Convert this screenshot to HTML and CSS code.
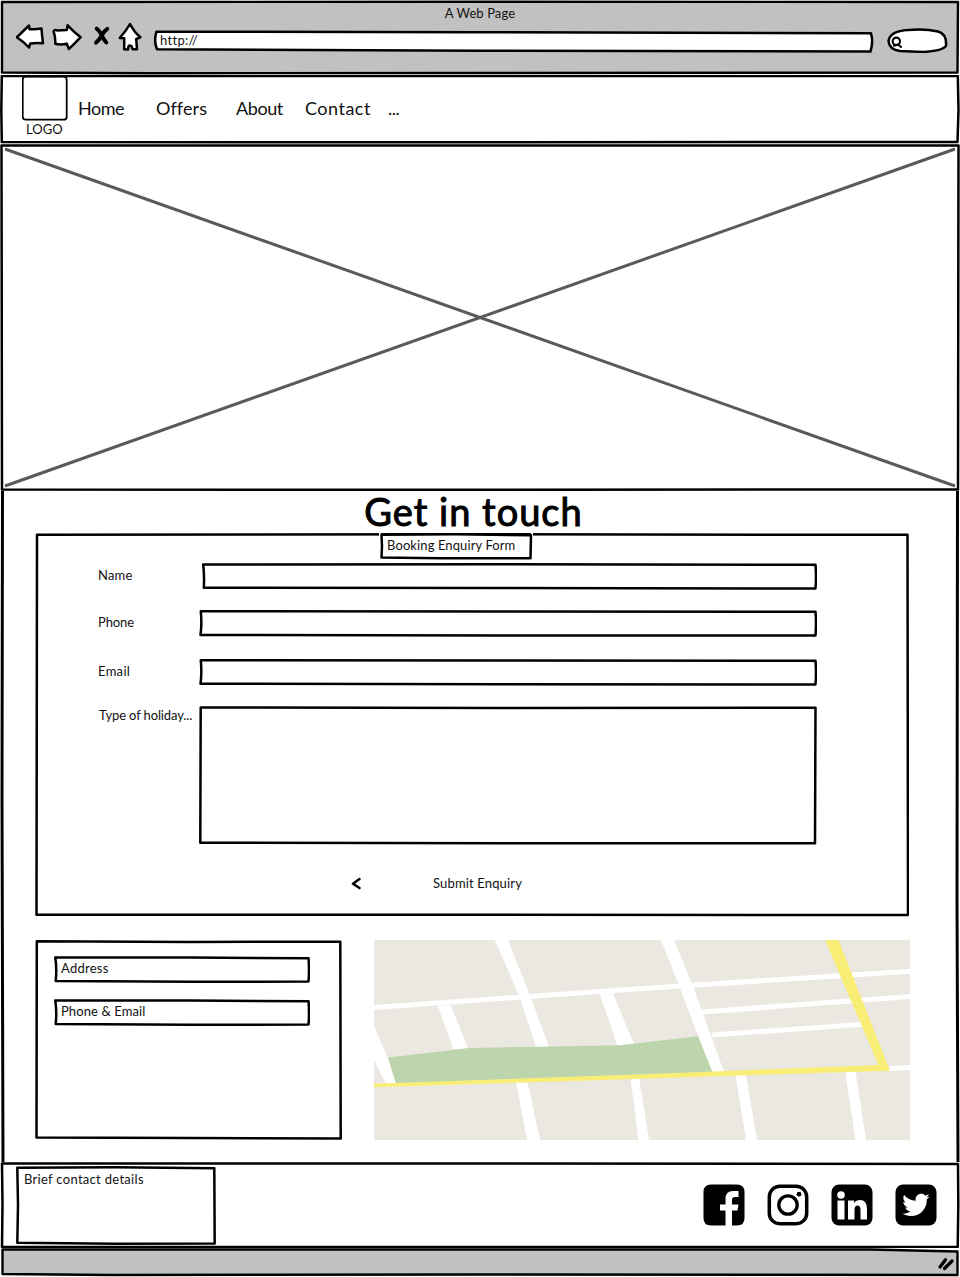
FILE: index.html
```html
<!DOCTYPE html>
<html lang="en">
<head>
<meta charset="utf-8">
<title>A Web Page</title>
<link rel="stylesheet" href="styles.css">
</head>
<body>
<div class="window">
  <header class="chrome stack">
    <svg class="ink" viewBox="0 0 960 75"><path class="grey" d="M2 2 480 1.8 958 2 957.5 72.5 480 73 150 73.2 2 72.5Z"/></svg>
    <div class="chrome-body">
      <div class="window-title"><span class="t-title">A Web Page</span></div>
      <div class="toolbar">
        <svg class="ink" width="29" height="30" viewBox="16 23 29 30"><path class="paper" d="M16.8 37.3 29 25.5 29.6 29.3Q36 29.6 41.5 28.6 42 36 43 43.2 36 42.5 30.3 43.5L29 47.5Q24 42 16.8 37.3Z"/></svg>
        <svg class="ink right" width="30" height="30" viewBox="52 23 30 30"><path class="paper" d="M53.6 31.5Q54.2 29.5 57 30.4L66.8 30 67.6 25.3Q74 32 80.6 37.2 74.5 44 68.8 49L66.8 43.6Q61 45.2 55.3 43.8 55.6 37 53.6 31.5Z"/></svg>
        <svg class="ink stop" width="18" height="30" viewBox="93 23 18 30"><path class="cancel" d="M96.700 28.600 Q100 31 101.700 35.500 104 40 106.300 42.500M107.300 28.800Q103.500 31.500 101.700 35.500 99 40.500 96 42.600"/></svg>
        <svg class="ink home" width="25" height="30" viewBox="118 23 25 30"><path class="paper" d="M130 24Q134 32 140.300 37.300L136.200 39 137 49.200 132.500 49.200 131.500 46Q129.500 45 128.600 46L128 49.500 124.200 49.200 124.200 38.200 119.700 38Q126 31 130 24Z"/></svg>
        <div class="url stack">
          <svg class="ink" viewBox="154 23 720 30"><path class="paper" d="M156.500 31.700 480 32.200 871 33.300Q873.500 42 870.500 51.500L480 50.700 157 49.300Q153.500 41 156.500 31.700Z"/></svg>
          <span class="t-url">http://</span>
        </div>
        <svg class="ink search" width="62" height="30" viewBox="886 23 62 30"><path class="paper" d="M900 51Q889 49.500 888.500 41 890 31 908 30 925 28.500 938 31.500 947 34 946 46 942 51 923 52 911 51.500 900 51Z"/><circle class="line lens" cx="896.300" cy="41.300" r="3.700"/><path class="line lens" d="M894 45.700 898 44.500 901 47"/></svg>
      </div>
    </div>
  </header>

  <nav class="nav stack">
    <svg class="ink" viewBox="0 75 960 69"><path class="line" d="M1.800 76 480 76 957.800 76 958.500 110 957.500 142 480 142.300 1.800 142 1.300 110Z"/></svg>
    <div class="nav-body">
      <div class="brand">
        <svg class="ink" width="46" height="46" viewBox="22 75 46 46"><rect class="line logo-box" x="22.700" y="76.700" width="44" height="43" rx="3"/></svg>
        <span class="t-logo">LOGO</span>
      </div>
      <div class="links">
        <a class="t-home">Home</a><a class="t-offers">Offers</a><a class="t-about">About</a><a class="t-contact">Contact</a><a class="t-more">...</a>
      </div>
    </div>
  </nav>

  <section class="hero">
    <svg class="ink" viewBox="0 144 960 347"><path class="cross" d="M5 149 955 486M5 486 955 149"/><path class="line" d="M1.500 145.500H958.500L958 489.500 480 489.800 2 489.500Z"/></svg>
  </section>

  <main class="main stack">
    <svg class="ink" viewBox="0 491 960 671"><path class="side" d="M2.500 491 2 800 3 1162M957.500 491 957 900 958 1162"/></svg>
    <div class="main-body">
      <h1 class="heading"><span class="t-heading">Get in touch</span></h1>

      <form class="enquiry stack">
        <svg class="ink" viewBox="35 533 874 384"><path class="line" d="M37 534.800 480 534.300 907.500 534.800 908 915 480 914.800 36.500 914.800Z"/></svg>
        <div class="enquiry-body">
          <div class="legend stack">
            <svg class="ink" viewBox="380 533 152 27"><path class="gap" d="M380 532V538M532 532V538"/><path class="paper" d="M381.500 534.800 455 534.300 531 535.200 530.500 558.300 440 558.300 381.500 557.500 382 546Z"/></svg>
            <span class="t-legend">Booking Enquiry Form</span>
          </div>
          <div class="row row-name"><label class="t-name">Name</label>
            <svg class="ink" width="616" height="28" viewBox="201 562 616 28"><path class="line" d="M203.200 564.500 500 564.200 815.500 564.800Q816.500 576 815.500 588.500L500 588 203.800 587.800Q204.500 576 203.200 564.500Z"/></svg></div>
          <div class="row row-phone"><label class="t-phone">Phone</label>
            <svg class="ink" width="619" height="28" viewBox="198 609 619 28"><path class="line" d="M200.800 611.300 500 611.500 815.500 611.800Q816.500 623 815.500 635.500L500 635.500 200.500 635Q202 624 200.800 611.300Z"/></svg></div>
          <div class="row row-email"><label class="t-email">Email</label>
            <svg class="ink" width="619" height="28" viewBox="198 658 619 28"><path class="line" d="M200.800 660.300 500 660.500 815.500 660.800Q816.500 672 815.500 684.500L500 684.200 200.500 683.800Q202 673 200.800 660.300Z"/></svg></div>
          <div class="row row-type"><label class="t-type">Type of holiday...</label>
            <svg class="ink" width="619" height="139" viewBox="198 706 619 139"><path class="line" d="M200.700 707.500 500 708 815.500 707.800 815 843.300 500 843.300 200.300 842.700Z"/></svg></div>
          <div class="submit">
            <svg class="ink" width="10" height="14" viewBox="351 877 10 14"><path class="line" d="M359.500 879 353 883.700 359.500 888"/></svg>
            <span class="t-submit">Submit Enquiry</span>
          </div>
        </div>
      </form>

      <div class="lower">
        <div class="details stack">
          <svg class="ink" viewBox="35 940 307 200"><path class="line" d="M36.800 941.300 190 942 340.300 941.700 340.700 1138.500 190 1138 36.500 1137.500Z"/></svg>
          <div class="details-body">
            <div class="entry stack"><svg class="ink" viewBox="54 956 256 28"><path class="line" d="M55.300 957.500 190 957.500 308.500 958.200Q309.500 970 308.500 981.500L190 981.800 55.700 981Q57 969 55.300 957.500Z"/></svg><span class="t-address">Address</span></div>
            <div class="entry stack"><svg class="ink" viewBox="54 999 256 28"><path class="line" d="M55.300 1000.500 190 1000.500 308.500 1001.200Q309.500 1013 308.500 1024.500L190 1024.800 55.700 1024Q57 1012 55.300 1000.500Z"/></svg><span class="t-pe">Phone &amp; Email</span></div>
          </div>
        </div>
        <svg class="map" width="536" height="200" viewBox="374 940 536 200">
          <rect x="374" y="940" width="536" height="200" fill="#ebe8e2"/>
          <g fill="none" stroke="#fff" stroke-width="5"><path d="M374 1007.500 650 987.900 910 971.300M702 1012 910 996.500M712 1035 868 1024M889 1068.500 910 1067.500"/></g>
          <g fill="#fff">
            <path d="M494.700 940H507.700L531 998 549 1047H536.300L520 998Z"/>
            <path d="M437.700 1006 450.700 1005 468 1049H453.300Z"/>
            <path d="M599.700 994 612.700 993 634 1044 617.700 1046Z"/>
            <path d="M374 1026 388 1058 396 1084H386L374 1060Z"/>
            <path d="M661 940H674L694 989 724 1072H712L680 988Z"/>
            <path d="M516 1082H527.500L540 1140H527ZM630.500 1078H639L649 1140H638.500ZM735.500 1075H746L757 1140H746ZM845 1071H855.500L866 1140H855.500Z"/>
          </g>
          <path fill="#bcd5ad" d="M388 1057.500 453 1050 468 1048 620 1045.300 698 1036.300 712.500 1072 396 1083.500Z"/>
          <path fill="#f9ee75" d="M374 1083.700 650 1074 878.500 1065 825 940H838.500L890 1070.700 650 1078.500 374 1087.300Z"/>
        </svg>
      </div>
    </div>
  </main>

  <footer class="footer stack">
    <svg class="ink" viewBox="0 1162 960 86"><path class="line" d="M2 1163.500 480 1163.500 958 1164 958.300 1205 957.700 1247 480 1247 2 1247 2.500 1205Z"/></svg>
    <div class="footer-body">
      <div class="brief stack">
        <svg class="ink" viewBox="16 1166 200 79"><path class="line" d="M17.300 1167.800 115 1167.300 214.300 1168.300 214.700 1243.500 115 1243.700 17.300 1242.700 18 1205Z"/></svg>
        <span class="t-brief">Brief contact details</span>
      </div>
      <div class="social">
        <svg width="42" height="42" viewBox="0 0 42 42"><path d="M8 .5H34Q41.500.500 41.500 8V34Q41.500 41.500 34 41.500H29V26.500H34.500L35.500 20.500H29V16Q29 13 32 13H35.500V7H30Q22.500 7 22.500 15V20.500H17V26.500H22.500V41.500H8Q.500 41.500.500 34V8Q.500.500 8 .500Z"/></svg>
        <svg width="42" height="42" viewBox="0 0 42 42"><rect x="2.300" y="2.300" width="37.400" height="37.400" rx="10.500" fill="none" stroke="#000" stroke-width="3.500"/><circle cx="21" cy="21" r="9.200" fill="none" stroke="#000" stroke-width="3.300"/><circle cx="32" cy="10.200" r="2.400"/></svg>
        <svg width="42" height="42" viewBox="0 0 42 42"><rect x=".5" y=".5" width="41" height="41" rx="7.500"/><g fill="#fff"><circle cx="10" cy="11" r="3.800"/><rect x="6.500" y="16.500" width="7" height="19"/><path d="M17 16.500H23V19Q25 16 29 16 36 16 36 25V35.500H29.500V26Q29.500 21.500 26.500 21.500 23.500 21.500 23.500 26V35.500H17Z"/></g></svg>
        <svg width="42" height="42" viewBox="0 0 42 42"><rect x=".5" y=".5" width="41" height="41" rx="7.500"/><path fill="#fff" transform="translate(7.200 7.300) scale(.0535)" d="M459.370 151.716c.325 4.548.325 9.097.325 13.645 0 138.720-105.583 298.558-298.558 298.558-59.452 0-114.680-17.219-161.137-47.106 8.447.974 16.568 1.299 25.340 1.299 49.055 0 94.213-16.568 130.274-44.832-46.132-.975-84.792-31.188-98.112-72.772 6.498.974 12.995 1.624 19.818 1.624 9.421 0 18.843-1.300 27.614-3.573-48.081-9.747-84.143-51.980-84.143-102.985v-1.299c13.969 7.797 30.214 12.670 47.431 13.319-28.264-18.843-46.781-51.005-46.781-87.391 0-19.492 5.197-37.360 14.294-52.954 51.655 63.675 129.300 105.258 216.365 109.807-1.624-7.797-2.599-15.918-2.599-24.040 0-57.828 46.782-104.934 104.934-104.934 30.213 0 57.502 12.670 76.670 33.137 23.715-4.548 46.456-13.320 66.599-25.340-7.798 24.366-24.366 44.833-46.132 57.827 21.117-2.273 41.584-8.122 60.426-16.243-14.292 20.791-32.161 39.308-52.628 54.253z"/></svg>
      </div>
    </div>
  </footer>

  <div class="status">
    <svg class="ink" viewBox="0 1248 960 29"><path class="grey" d="M2.500 1249.500 480 1249.500 870 1249.500 957.500 1251.500 957.500 1275 480 1274.500 110 1275 2.500 1274Z"/><path class="grip" d="M940 1267 945.500 1259.800M944.500 1268.500 952 1261"/></svg>
  </div>
</div>
</body>
</html>
```
FILE: styles.css
```css
* { box-sizing: border-box; }
body { margin: 0; background: #fff; color: #111; font: 13px/18px Lato, "Noto Sans", sans-serif; font-variant-ligatures: none; }
svg { display: block; flex: none; }
span, a, label { white-space: nowrap; }
.window { width: 960px; height: 1277px; display: flex; flex-direction: column; overflow: hidden; }
.stack { display: grid; grid-template: 100% / 100%; }
.stack > * { grid-area: 1 / 1; }
.stack > svg { width: 100%; height: 100%; }

.ink path, .ink rect, .ink circle { stroke: #000; stroke-width: 2.5; stroke-linejoin: round; stroke-linecap: round; }
.ink .line { fill: none; }
.ink .paper { fill: #fff; }
.ink .grey { fill: #c1c1c1; stroke-width: 2.4; }
.ink .cancel { fill: none; stroke-width: 3.9; }
.ink .lens { stroke-width: 2.1; }
.ink .gap { stroke: #fff; stroke-width: 2; stroke-linecap: butt; }
.ink .side { fill: none; stroke-width: 3; }
.ink .cross { fill: none; stroke: #5a5a5a; stroke-width: 3; stroke-linecap: butt; }
.ink .logo-box { stroke-width: 1.8; }
.ink .grip { stroke-width: 3.3; }

.chrome { height: 75px; }
.window-title { height: 23px; padding-top: 4px; text-align: center; }
.toolbar { height: 30px; display: flex; padding-left: 16px; }
.right { margin-left: 7px; }
.stop { margin-left: 11px; }
.home { margin-left: 7px; }
.url { width: 720px; height: 30px; margin-left: 11px; }
.url span { padding: 8px 0 0 6px; }
.search { margin-left: 12px; }

.nav { height: 69px; }
.nav-body { display: flex; }
.brand { width: 56px; margin-left: 22px; }
.brand span { display: block; padding-left: 4px; margin-top: -1px; }
.links { display: grid; grid-template-columns: 78px 80px 69px 83px 40px; padding-top: 21px; font-size: 18px; line-height: 24px; }
.hero { height: 347px; }
.hero svg { width: 960px; height: 347px; }

.main { height: 671px; }
.heading { margin: 0; height: 42px; padding: 0 13px 0 0; text-align: center; font-size: 38px; line-height: 41px; font-weight: 400; color: #000; -webkit-text-stroke: 1px #000; }
.enquiry { width: 874px; height: 384px; margin-left: 35px; }
.legend { width: 152px; height: 27px; margin-left: 345px; }
.legend svg { overflow: visible; }
.legend span { padding: 3px 0 0 7px; }
.row { display: flex; justify-content: space-between; width: 719px; margin-left: 63px; }
.row label { padding-top: 4px; }
.row-name { margin-top: 2px; }
.row-phone { margin-top: 19px; }
.row-email { margin-top: 21px; }
.row-type { margin-top: 20px; }
.row-type label { padding: 0 0 0 1px; }
.submit { display: flex; align-items: center; gap: 72px; margin: 28px 0 0 316px; height: 22px; }
.submit span { padding-bottom: 3px; }
.lower { display: flex; gap: 32px; margin: 23px 0 0 35px; }
.details { width: 307px; height: 200px; }
.details-body { padding: 16px 0 0 19px; display: flex; flex-direction: column; gap: 15px; }
.entry { width: 256px; height: 28px; }
.entry span { padding: 3px 0 0 7px; }

.footer { height: 86px; }
.footer-body { display: flex; justify-content: space-between; padding: 4px 23px 0 16px; }
.brief { width: 200px; height: 79px; }
.brief span { padding: 4px 0 0 8px; }
.social { display: flex; gap: 22px; padding-top: 18px; }
.status svg { width: 960px; height: 29px; }

/* Tracking per label */
.t-title { letter-spacing: .1px; }
.t-url { letter-spacing: .3px; }
.t-home { letter-spacing: -.5px; }
.t-offers { letter-spacing: .1px; }
.t-about { letter-spacing: -.4px; }
.t-contact { letter-spacing: .5px; }
.t-more { letter-spacing: -.5px; }
.t-heading { letter-spacing: 1px; }
.t-legend { letter-spacing: .1px; }
.t-name { letter-spacing: .2px; }
.t-phone { letter-spacing: -.1px; }
.t-email { letter-spacing: .3px; }
.t-type { letter-spacing: -.13px; }
.t-submit { letter-spacing: .15px; }
.t-address { letter-spacing: .25px; }
.t-pe { letter-spacing: .1px; }
.t-brief { letter-spacing: .3px; }
```
